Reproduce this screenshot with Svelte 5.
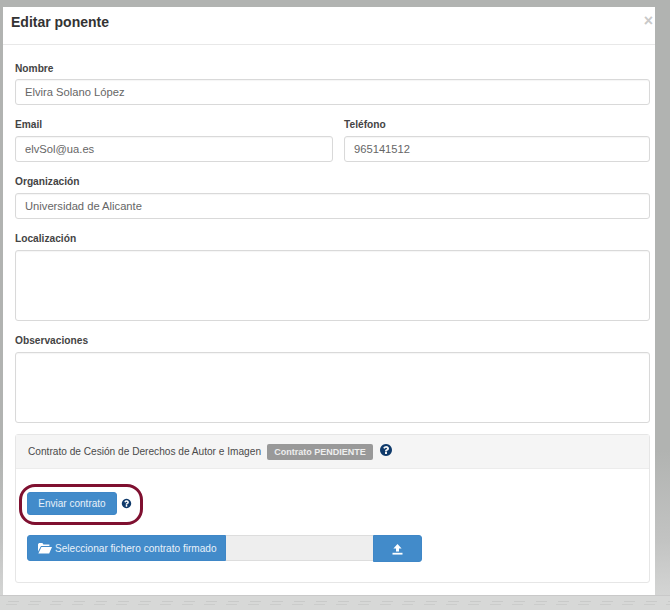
<script>
  const helpPath = 'M1024 1376v-192q0-14-9-23t-23-9h-192q-14 0-23 9t-9 23v192q0 14 9 23t23 9h192q14 0 23-9t9-23zm256-672q0-88-55.5-163t-138.5-116-170-41q-243 0-371 213-15 24 8 42l132 100q7 6 19 6 16 0 25-12 53-68 86-92 34-24 86-24 48 0 85.5 26t37.5 59q0 38-20 61t-68 45q-63 28-115.5 86.5t-52.5 125.5v36q0 14 9 23t23 9h192q14 0 23-9t9-23q0-19 21.5-49.5t54.5-49.5q32-18 49-28.5t46-35 44.5-48 28-60.5 12.5-81zm384 192q0 209-103 385.5t-279.5 279.5-385.5 103-385.5-103-279.5-279.5-103-385.5 103-385.5 279.5-279.5 385.5-103 385.5 103 279.5 279.5 103 385.5z';
</script>

<div class="page">
  <div class="modal">
    <header class="modal-head">
      <h4>Editar ponente</h4>
      <span class="close">×</span>
    </header>
    <div class="modal-body">
      <div class="field first">
        <label for="nombre">Nombre</label>
        <input id="nombre" value="Elvira Solano López" />
      </div>
      <div class="row">
        <div class="field">
          <label for="email">Email</label>
          <input id="email" value="elvSol@ua.es" />
        </div>
        <div class="field">
          <label for="tel">Teléfono</label>
          <input id="tel" value="965141512" />
        </div>
      </div>
      <div class="field">
        <label for="org">Organización</label>
        <input id="org" value="Universidad de Alicante" />
      </div>
      <div class="field">
        <label for="loc">Localización</label>
        <textarea id="loc"></textarea>
      </div>
      <div class="field">
        <label for="obs">Observaciones</label>
        <textarea id="obs"></textarea>
      </div>

      <section class="panel">
        <div class="panel-head">
          <span>Contrato de Cesión de Derechos de Autor e Imagen</span>
          <span class="badge">Contrato PENDIENTE</span>
          <svg class="help big" viewBox="0 0 1792 1792"><path d={helpPath} /></svg>
        </div>
        <div class="panel-body">
          <div class="send">
            <button class="btn">Enviar contrato</button>
            <svg class="help" viewBox="0 0 1792 1792"><path d={helpPath} /></svg>
            <span class="ring"></span>
          </div>
          <div class="file">
            <button class="btn pick">
              <svg width="14" height="11" viewBox="0 0 14 11"><path d="M0 1.2 1 0h3.4l1 1.4H11.4v1.5H3L0 8.4z" /><path d="M3.4 4H14l-2.8 6.6H.4z" /></svg>
              <span>Seleccionar fichero contrato firmado</span>
            </button>
            <div class="file-name"></div>
            <button class="btn upload" aria-label="Subir">
              <svg width="11" height="12" viewBox="0 0 11 12"><path d="M5.5 1 9.6 5.6H7v3H4v-3H1.4z" /><path d="M.5 9.8h10V11.6H.5z" /></svg>
            </button>
          </div>
        </div>
      </section>
    </div>
  </div>
  <div class="below"></div>
</div>

<style>
  :global(body) { margin: 0; background: #b2b3b2; }
  .page {
    width: 670px;
    height: 610px;
    overflow: hidden;
    padding: 7px 0 0 3px;
    box-sizing: border-box;
    background: linear-gradient(#b1b3b1 0, #b1b3b1 450px, #c2c3c2 540px, #d4d5d4 595px);
    font-family: "Liberation Sans", Arial, sans-serif;
    color: #333;
  }
  .modal { width: 652px; height: 588px; background: #fff; box-sizing: border-box; }
  .modal-head {
    height: 38px;
    box-sizing: border-box;
    border-bottom: 1px solid #e8e8e8;
    display: flex;
    justify-content: space-between;
    padding: 7px 2px 0 8px;
  }
  h4 { margin: 0; font-size: 14px; line-height: 16px; font-weight: 700; color: #333; }
  .close { font-size: 16px; line-height: 11px; font-weight: 700; color: #c9c9c9; padding-top: 1px; }
  .modal-body { padding: 18px 5px 0 12px; }
  .field { display: flex; flex-direction: column; }
  label { font-size: 10.2px; line-height: 12px; font-weight: 700; color: #444; margin-bottom: 5px; }
  .first label { margin-bottom: 4px; }
  input, textarea {
    box-sizing: border-box;
    width: 100%;
    height: 26px;
    margin: 0 0 14px;
    padding: 0 9px;
    border: 1px solid #d9d9d9;
    border-radius: 3px;
    background: #fff;
    font: 11.2px "Liberation Sans", Arial, sans-serif;
    color: #666;
    box-shadow: inset 0 1px 1px rgba(0, 0, 0, 0.04);
    outline: none;
    display: block;
  }
  textarea { height: 71px; resize: none; }
  .row { display: grid; grid-template-columns: 318px 306px; gap: 11px; }
  .panel {
    width: 635px;
    height: 149px;
    box-sizing: border-box;
    margin-top: -3px;
    border: 1px solid #e6e6e6;
    border-radius: 3px;
  }
  .panel-head {
    height: 34px;
    box-sizing: border-box;
    background: #f5f5f5;
    border-bottom: 1px solid #ececec;
    display: flex;
    align-items: center;
    padding-left: 12px;
    font-size: 10.15px;
    color: #4a4a4a;
  }
  .badge {
    margin-left: 6px;
    width: 106px;
    box-sizing: border-box;
    text-align: center;
    height: 16px;
    line-height: 16px;
    background: #999;
    border-radius: 2px;
    color: #eee;
    font-weight: 700;
    font-size: 9px;
  }
  .help { width: 11px; height: 11px; fill: #0f3a6b; display: block; }
  .help.big { width: 14px; height: 14px; margin: -4px 0 0 6px; }
  .panel-body { padding: 23px 0 0 11px; }
  .send { position: relative; display: flex; align-items: center; gap: 4px; height: 23px; }
  .ring {
    position: absolute;
    left: -8px;
    top: -8px;
    width: 124px;
    height: 41px;
    box-sizing: border-box;
    border: 3px solid #7f1030;
    border-radius: 16px;
  }
  .btn {
    height: 23px;
    padding: 0 11px;
    border: 1px solid #3f87c7;
    border-radius: 3px;
    background: #428bca;
    color: #e8f1f9;
    font: 10px "Liberation Sans", Arial, sans-serif;
    display: flex;
    align-items: center;
    gap: 3px;
  }
  .send .btn { width: 90px; justify-content: center; padding: 0; }
  svg path { fill: inherit; }
  .btn svg { fill: #fff; display: block; flex: none; }
  .file { display: flex; margin-top: 20px; height: 26px; }
  .pick { height: 26px; width: 199px; border-radius: 3px 0 0 3px; padding: 0 0 0 10px; white-space: nowrap; }
  .pick span { font-size: 10.1px; }
  .file-name { width: 147px; box-sizing: border-box; background: #eee; border: 1px solid #ddd; border-width: 1px 0; }
  .upload { height: 27px; width: 49px; justify-content: center; padding: 0; border-radius: 0 3px 3px 0; }
  .below {
    margin: 0 0 0 -3px;
    width: 670px;
    height: 15px;
    box-sizing: border-box;
    border-top: 1px solid #c9c9c9;
    background:
      repeating-linear-gradient(90deg, #c9cac9 0 11px, transparent 11px 22px) 8px 5px / 100% 1px no-repeat,
      repeating-linear-gradient(90deg, #cbcccb 0 11px, transparent 11px 22px) 6px 8px / 100% 1px no-repeat,
      #d7d8d7;
  }
</style>
